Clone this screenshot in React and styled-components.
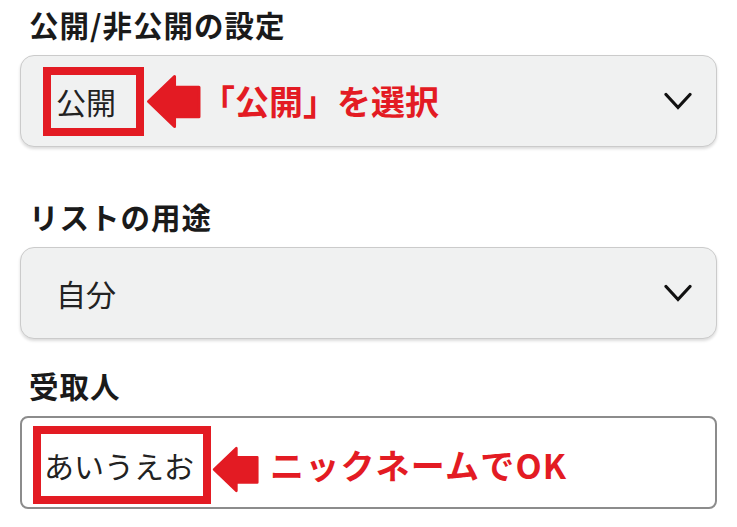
import React from "react";
import styled, { createGlobalStyle } from "styled-components";

const RED = "#e31b23";

const Global = createGlobalStyle`
  html, body { margin: 0; padding: 0; background: #ffffff; }
  body { font-family: "Noto Sans CJK JP", "Noto Sans", sans-serif; color: #1a1a1a; }
`;

const Page = styled.div`
  width: 737px;
  height: 527px;
  box-sizing: border-box;
  padding: 6px 20px 0 20px;
  display: flex;
  flex-direction: column;
  overflow: hidden;
`;

const Field = styled.div`
  display: flex;
  flex-direction: column;
  margin-bottom: ${(p) => p.$after || 0}px;
`;

const Label = styled.div`
  font-size: 29.5px;
  line-height: 36px;
  font-weight: 700;
  color: #1a1a1a;
  padding-left: 9px;
  margin-bottom: 13px;
  letter-spacing: 1px;
`;

const Select = styled.div`
  box-sizing: border-box;
  height: 92px;
  display: flex;
  align-items: center;
  padding: 0 24px 0 22px;
  background: #f0f1f1;
  border: 1px solid #cbcbcb;
  border-radius: 14px;
  box-shadow: 0 2px 3px rgba(0, 0, 0, 0.14);
`;

const Input = styled.div`
  box-sizing: border-box;
  height: 93px;
  display: flex;
  align-items: center;
  padding: 8px 0 3px 11px;
  background: #ffffff;
  border: 2px solid #8c8c8c;
  border-radius: 8px;
`;

const Highlight = styled.div`
  box-sizing: border-box;
  height: ${(p) => p.$h}px;
  display: flex;
  align-items: center;
  padding: 0 ${(p) => p.$pr}px 0 ${(p) => p.$pl}px;
  border: 8px solid ${(p) => (p.$on ? RED : "transparent")};
`;

const Value = styled.span`
  font-size: 30px;
  line-height: 1;
  font-weight: 400;
  color: #222222;
  white-space: nowrap;
`;

const Note = styled.span`
  font-size: 34px;
  line-height: 1;
  font-weight: 700;
  color: ${RED};
  white-space: nowrap;
  margin-left: ${(p) => p.$ml || 0}px;
  letter-spacing: ${(p) => p.$ls || 0}px;
`;

const Spacer = styled.div`
  flex: 1;
`;

const ArrowSvg = styled.svg`
  flex: none;
  display: block;
  margin-left: ${(p) => p.$ml}px;
  margin-top: ${(p) => p.$mt || 0}px;
`;

const Arrow = ({ w, h, ml, mt }) => (
  <ArrowSvg $ml={ml} $mt={mt} width={w} height={h} viewBox="0 0 54 54">
    <path
      d="M2.5 27 L28 2.5 L28 13 L52 13 L52 42 L28 42 L28 51.5 Z"
      fill={RED}
      stroke={RED}
      strokeWidth="3"
      strokeLinejoin="round"
    />
  </ArrowSvg>
);

const ChevronSvg = styled.svg`
  flex: none;
  display: block;
`;

const Chevron = () => (
  <ChevronSvg width="28" height="19" viewBox="0 0 28 19">
    <polyline
      points="2,2.5 14,15.5 26,2.5"
      fill="none"
      stroke="#111"
      strokeWidth="3.2"
      strokeLinecap="round"
      strokeLinejoin="miter"
    />
  </ChevronSvg>
);

export default function App() {
  return (
    <>
      <Global />
      <Page>
        <Field $after={51}>
          <Label>公開/非公開の設定</Label>
          <Select>
            <Highlight $on $h={69} $pl={5} $pr={20}>
              <Value>公開</Value>
            </Highlight>
            <Arrow w={55} h={55} ml={2} />
            <Note $ml={0}>「公開」を選択</Note>
            <Spacer />
            <Chevron />
          </Select>
        </Field>
        <Field $after={28}>
          <Label>リストの用途</Label>
          <Select>
            <Highlight $h={69} $pl={5} $pr={20}>
              <Value>自分</Value>
            </Highlight>
            <Spacer />
            <Chevron />
          </Select>
        </Field>
        <Field>
          <Label>受取人</Label>
          <Input>
            <Highlight $on $h={78} $pl={3} $pr={9}>
              <Value>あいうえお</Value>
            </Highlight>
            <Arrow w={47} h={47} ml={1} mt={8} />
            <Note $ml={11} $ls={1.2}>ニックネームでOK</Note>
          </Input>
        </Field>
      </Page>
    </>
  );
}
